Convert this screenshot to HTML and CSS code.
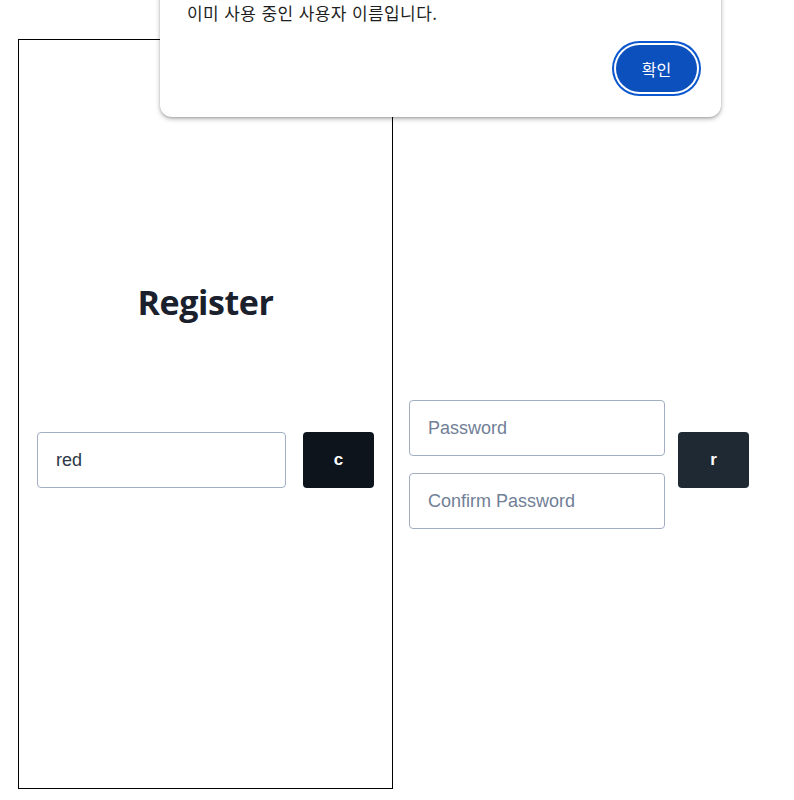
FILE: index.html
```html
<!DOCTYPE html>
<html lang="ko">
<head>
<meta charset="utf-8">
<title>Register</title>
<link rel="stylesheet" href="styles.css">
</head>
<body>
<div class="page">
  <div class="box">
    <h1 class="title">Register</h1>
    <div class="row">
      <input class="field field-user" type="text" value="red">
      <button class="btn btn-c">c</button>
    </div>
  </div>
  <div class="side">
    <div class="fields">
      <input class="field field-pw" type="password" placeholder="Password">
      <input class="field field-pw" type="password" placeholder="Confirm Password">
    </div>
    <button class="btn btn-r">r</button>
  </div>
</div>
<div class="dialog">
  <p class="dialog-msg">이미 사용 중인 사용자 이름입니다.</p>
  <div class="dialog-actions">
    <button class="dialog-ok">확인</button>
  </div>
</div>
</body>
</html>
```
FILE: styles.css
```css
html, body {
  margin: 0;
  padding: 0;
  background: #fff;
}
body {
  font-family: "Liberation Sans", Arial, sans-serif;
}
.page {
  display: flex;
  align-items: flex-start;
  padding: 39px 0 0 18px;
}
.box {
  box-sizing: border-box;
  width: 375px;
  height: 750px;
  border: 1px solid #000;
  padding-top: 241px;
}
.title {
  margin: 0;
  text-align: center;
  font-family: "Open Sans", "Noto Sans", sans-serif;
  font-weight: 700;
  font-size: 34px;
  line-height: 43px;
  color: #1a202c;
  letter-spacing: -0.4px;
}
.row {
  display: flex;
  align-items: flex-start;
  margin-top: 108px;
  padding-left: 18px;
  gap: 17px;
}
.field {
  box-sizing: border-box;
  height: 56px;
  border: 1px solid #a0aec0;
  border-radius: 4px;
  padding: 0 18px;
  font-family: "Liberation Sans", Arial, sans-serif;
  font-size: 18px;
  color: #2d3748;
  background: #fff;
  outline: none;
}
.field::placeholder {
  color: #718096;
}
.field-user {
  width: 249px;
}
.field-pw {
  width: 256px;
}
.btn {
  box-sizing: border-box;
  width: 71px;
  height: 56px;
  border: none;
  border-radius: 4px;
  color: #fff;
  font-family: "Liberation Sans", Arial, sans-serif;
  font-weight: 700;
  font-size: 17px;
  padding: 0;
}
.btn-c {
  background: #0d141b;
}
.btn-r {
  background: #1e2933;
  margin-top: 32px;
  margin-left: 13px;
}
.side {
  display: flex;
  align-items: flex-start;
  margin-left: 16px;
  margin-top: 361px;
}
.fields {
  display: flex;
  flex-direction: column;
  gap: 17px;
}
.dialog {
  position: absolute;
  left: 160px;
  top: -21px;
  box-sizing: border-box;
  width: 561px;
  background: #fff;
  border-radius: 12px;
  box-shadow: 0 2px 5px rgba(0, 0, 0, 0.28), 0 1px 2px rgba(0, 0, 0, 0.15);
  padding: 24px 24px 25px 27px;
}
.dialog-msg {
  margin: 0;
  font-family: "Noto Sans CJK KR", sans-serif;
  font-size: 17px;
  line-height: 20px;
  letter-spacing: 0.4px;
  color: #1f1f1f;
}
.dialog-actions {
  display: flex;
  justify-content: flex-end;
  margin-top: 22px;
}
.dialog-ok {
  box-sizing: border-box;
  width: 81px;
  height: 47px;
  border: none;
  border-radius: 24px;
  background: #0b50bd;
  color: #fff;
  font-family: "Noto Sans CJK KR", sans-serif;
  font-size: 16px;
  box-shadow: 0 0 0 2px #fff, 0 0 0 4px #0b57d0;
}
```
